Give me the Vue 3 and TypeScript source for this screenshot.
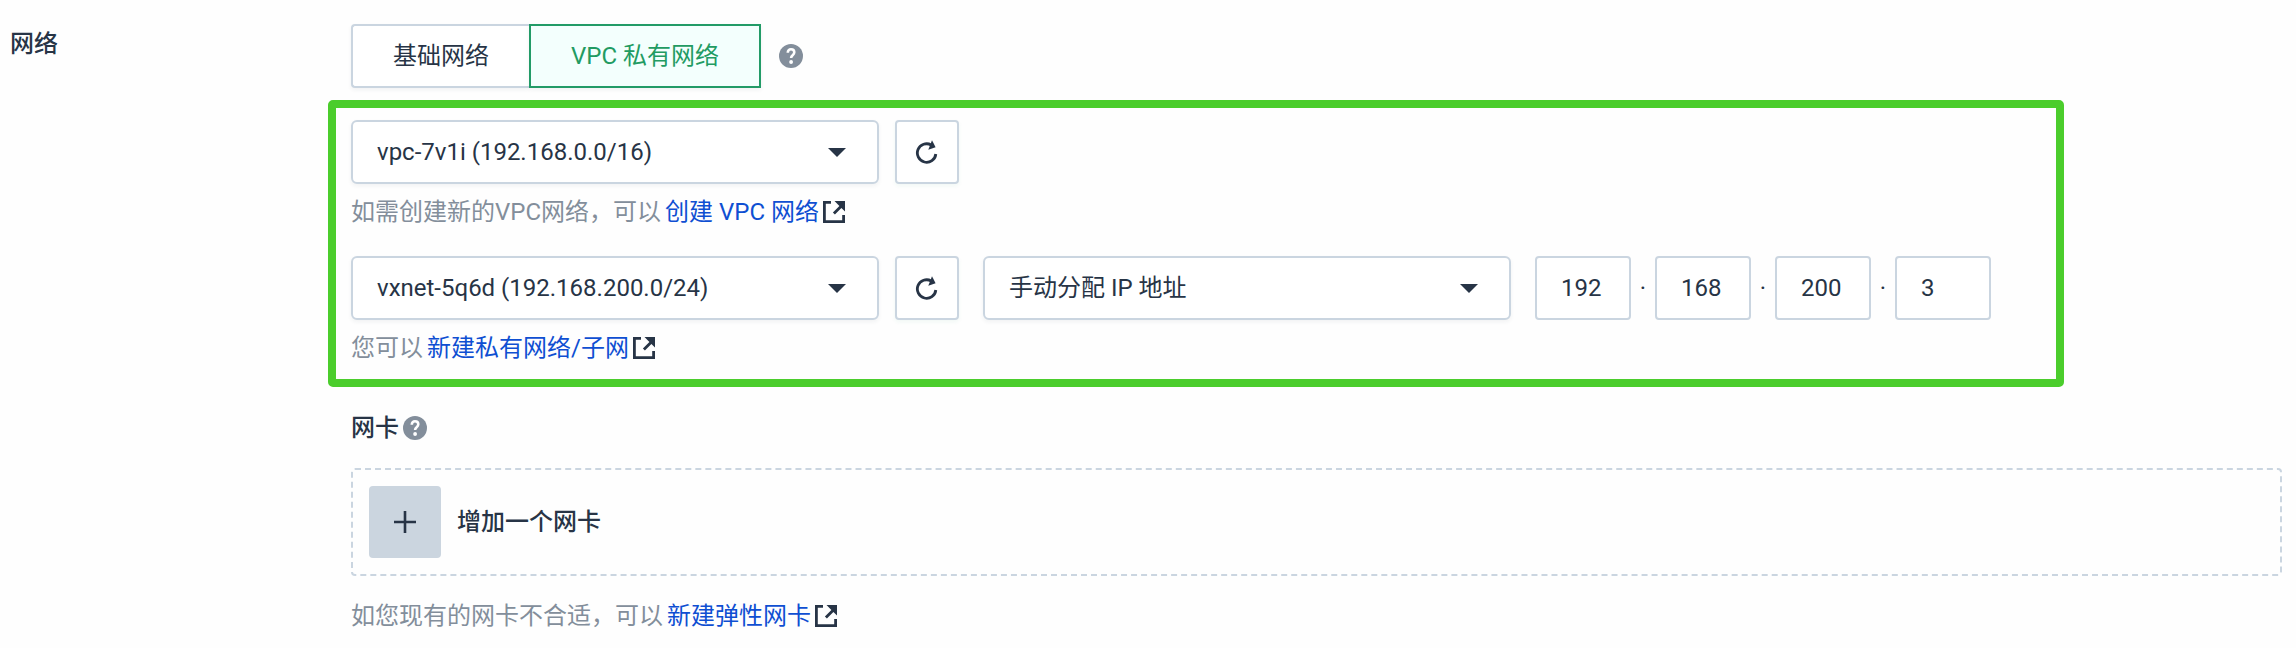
<script setup lang="ts">
import { defineComponent, h, ref } from 'vue'

const HelpIcon = defineComponent({
  render: () =>
    h('svg', { width: 24, height: 24, viewBox: '0 0 24 24' }, [
      h('circle', { cx: 12, cy: 12, r: 12, fill: '#838e9b' }),
      h('path', {
        d: 'M8.8 8.8V8.4C8.8 6.5 10.1 5.2 12 5.2s3.3 1.3 3.3 3.1c0 1.4-.8 2.1-1.7 2.9-1 .8-1.5 1.4-1.5 2.9',
        fill: 'none',
        stroke: '#fff',
        'stroke-width': 2.6,
      }),
      h('circle', { cx: 12.1, cy: 18, r: 1.9, fill: '#fff' }),
    ]),
})

const ExternalIcon = defineComponent({
  render: () =>
    h('svg', { width: 22, height: 22, viewBox: '0 0 22 22' }, [
      h('path', {
        d: 'M8 1.4H1.4v19.2h19.2V14',
        fill: 'none',
        stroke: '#273446',
        'stroke-width': 2.8,
      }),
      h('path', { d: 'M11.5 0H22v10.5L18.4 6.9l-6.5 6.5-2-2 6.5-6.5z', fill: '#273446' }),
    ]),
})

const RefreshIcon = defineComponent({
  render: () =>
    h('svg', { width: 24, height: 24, viewBox: '0 0 24 24' }, [
      h('path', {
        d: 'M20.8 14A9.25 9.25 0 1 1 16.2 5',
        fill: 'none',
        stroke: '#273446',
        'stroke-width': 2.8,
      }),
      h('path', { d: 'M17 .2L20.6 7.2L13.3 9.8z', fill: '#273446' }),
    ]),
})

const networkTypes = ['基础网络', 'VPC 私有网络']
const activeType = ref(1)
const ip = ref(['192', '168', '200', '3'])
</script>

<template>
  <main class="form">
    <div class="label">网络</div>
    <div class="content">
      <div class="types">
        <button
          v-for="(name, i) in networkTypes"
          :key="name"
          class="type"
          :class="{ active: i === activeType }"
          @click="activeType = i"
        >{{ name }}</button>
        <HelpIcon class="types-help" />
      </div>

      <section class="highlight">
        <div class="row">
          <div class="select"><span>vpc-7v1i (192.168.0.0/16)</span><i class="caret"></i></div>
          <button class="refresh"><RefreshIcon /></button>
        </div>
        <p class="hint">如需创建新的VPC网络，可以<a>创建 VPC 网络</a><ExternalIcon class="ext" /></p>

        <div class="row second">
          <div class="select"><span>vxnet-5q6d (192.168.200.0/24)</span><i class="caret"></i></div>
          <button class="refresh"><RefreshIcon /></button>
          <div class="select mode"><span>手动分配 IP 地址</span><i class="caret"></i></div>
          <div class="ip">
            <template v-for="(part, i) in ip" :key="i">
              <span v-if="i > 0" class="dot">·</span>
              <div class="octet">{{ part }}</div>
            </template>
          </div>
        </div>
        <p class="hint">您可以<a>新建私有网络/子网</a><ExternalIcon class="ext" /></p>
      </section>

      <div class="nic-title">网卡<HelpIcon class="nic-help" /></div>
      <div class="nic-add">
        <button class="plus">
          <svg width="22" height="22" viewBox="0 0 22 22">
            <path d="M11 0v22M0 11h22" stroke="#273446" stroke-width="2.6" />
          </svg>
        </button>
        <span>增加一个网卡</span>
      </div>
      <p class="hint nic-hint">如您现有的网卡不合适，可以<a>新建弹性网卡</a><ExternalIcon class="ext" /></p>
    </div>
  </main>
</template>

<style>
body {
  background: #fefefe;
}
</style>

<style scoped>
.form {
  display: flex;
  box-sizing: border-box;
  width: 2296px;
  height: 648px;
  padding: 24px 14px 0 10px;
  overflow: hidden;
  font-family: Roboto, 'Noto Sans CJK SC', sans-serif;
  font-size: 24px;
  line-height: 40px;
  color: #273446;
  white-space: nowrap;
}
svg {
  display: block;
  flex: none;
}
button {
  box-sizing: border-box;
  margin: 0;
  padding: 0;
  font: inherit;
  color: inherit;
  background: #fff;
}
.label {
  flex: none;
  width: 341px;
  font-weight: 500;
}
.content {
  flex: 1;
  min-width: 0;
}
.types {
  display: flex;
  align-items: center;
}
.type {
  width: 178px;
  height: 64px;
  border: 2px solid #cad5e0;
  border-right: 0;
  border-radius: 4px 0 0 4px;
  box-shadow: 0 2px 4px rgba(39, 52, 70, 0.06);
}
.type.active {
  width: 232px;
  border: 2px solid #229b67;
  border-radius: 0;
  background: #f3fffd;
  color: #229b62;
}
.types-help {
  margin-left: 18px;
}
.highlight {
  box-sizing: border-box;
  width: 1736px;
  height: 287px;
  margin: 12px 0 0 -23px;
  padding: 12px 15px 0;
  border: 8px solid #4bcd2c;
  border-radius: 5px;
}
.row {
  display: flex;
}
.row.second {
  margin-top: 16px;
}
.select {
  display: flex;
  align-items: center;
  justify-content: space-between;
  box-sizing: border-box;
  width: 528px;
  height: 64px;
  padding: 0 31px 0 24px;
  border: 2px solid #cad5e0;
  border-radius: 6px;
  background: #fff;
  box-shadow: 0 2px 4px rgba(39, 52, 70, 0.06);
}
.caret {
  border: 9px solid transparent;
  border-top-color: #273446;
  border-bottom: 0;
}
.refresh {
  display: flex;
  align-items: center;
  justify-content: center;
  width: 64px;
  height: 64px;
  margin-left: 16px;
  border: 2px solid #cad5e0;
  border-radius: 4px;
  box-shadow: 0 2px 4px rgba(34, 155, 103, 0.06);
}
.mode {
  margin-left: 24px;
}
.ip {
  display: flex;
  align-items: center;
  margin-left: 24px;
}
.octet {
  box-sizing: border-box;
  width: 96px;
  height: 64px;
  padding-left: 24px;
  border: 2px solid #cad5e0;
  border-radius: 4px;
  background: #fff;
  line-height: 60px;
}
.dot {
  width: 24px;
  text-align: center;
}
.hint {
  display: flex;
  align-items: center;
  height: 56px;
  margin: 0;
  color: #838e9b;
}
.hint a {
  margin-left: 4px;
  color: #0f4fd2;
}
.ext {
  margin-left: 4px;
}
.nic-title {
  display: flex;
  align-items: center;
  height: 24px;
  margin-top: 29px;
  font-weight: 500;
}
.nic-help {
  margin-left: 4px;
}
.nic-add {
  display: flex;
  align-items: center;
  box-sizing: border-box;
  height: 108px;
  margin-top: 28px;
  padding-left: 16px;
  border: 2px dashed #cad5e0;
  border-radius: 4px;
  font-weight: 500;
}
.plus {
  display: flex;
  align-items: center;
  justify-content: center;
  width: 72px;
  height: 72px;
  margin-right: 16px;
  border: 0;
  border-radius: 4px;
  background: #cbd5df;
}
.nic-hint {
  margin-top: 12px;
}
</style>
